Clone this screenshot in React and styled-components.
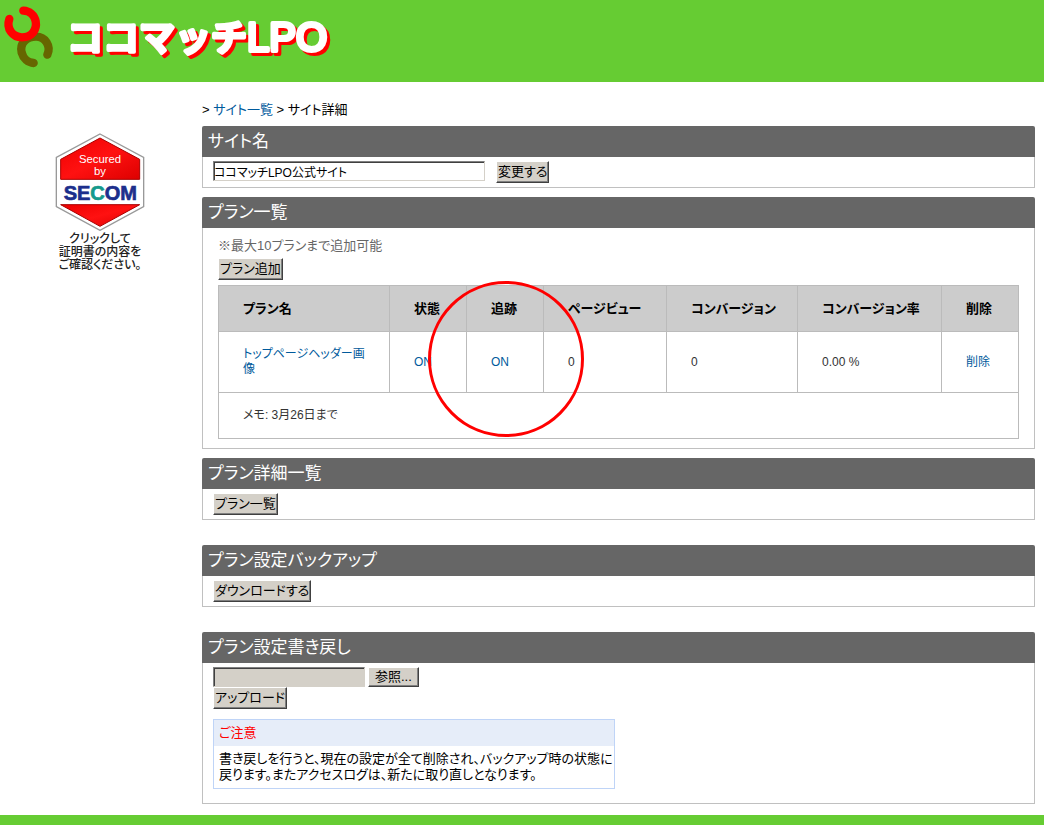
import React, { useRef, useState } from "react";
import styled, { createGlobalStyle } from "styled-components";

const GlobalStyle = createGlobalStyle`
  * {
    box-sizing: border-box;
  }
  body {
    margin: 0;
    background: #fff;
    color: #000;
    font-family: "Liberation Sans", "Noto Sans CJK JP", sans-serif;
    font-size: 13px;
    line-height: 16px;
    font-feature-settings: "palt";
  }
  button, input {
    font: inherit;
    font-feature-settings: inherit;
    color: inherit;
  }
`;

const Header = styled.header`
  display: flex;
  align-items: flex-start;
  gap: 8px;
  height: 82px;
  padding: 4px 0 0 2px;
  background: #66cc33;
`;

const Brand = styled.h1`
  display: flex;
  margin: 0;
`;

const BrandArt = styled.svg`
  fill: #fff;
  stroke: #fff;
  stroke-width: 4px;
  stroke-linejoin: round;
  filter: drop-shadow(3px 3px 0 #f00);
  font-family: "Noto Sans CJK JP", sans-serif;
  font-size: 36px;
  font-weight: 500;
  font-feature-settings: normal;

  tspan {
    font-family: "Liberation Sans", sans-serif;
    font-size: 40px;
    font-weight: 400;
  }
`;

const Layout = styled.div`
  display: grid;
  grid-template-columns: 202px minmax(0, 1fr);
  padding: 20px 9px 11px 0;
`;

const Side = styled.aside`
  display: flex;
  flex-direction: column;
  align-items: center;
  padding: 31px 2px 0 0;
`;

const SealLink = styled.a`
  display: flex;
  flex-direction: column;
  align-items: center;
  gap: 2px;
  color: #222;
  font-size: 12px;
  font-weight: 500;
  line-height: 13px;
  text-align: center;
  text-decoration: none;
`;

const Breadcrumb = styled.nav`
  margin-bottom: 8px;
`;

const Link = styled.a`
  color: #005a9c;
  text-decoration: none;
`;

const Panel = styled.section`
  margin-bottom: ${(p) => p.$gap || 0}px;
`;

const PanelTitle = styled.h2`
  margin: 0;
  padding: 0 6px;
  border-radius: 2px 2px 0 0;
  background: #666;
  color: #fff;
  font-size: 17px;
  font-weight: 400;
  line-height: 31px;
`;

const PanelBody = styled.div`
  padding: ${(p) => p.$pad || "4px 10px"};
  border: 1px solid #c0c0c0;
  border-top: 0;
`;

const Row = styled.div`
  display: flex;
  align-items: flex-start;
  gap: ${(p) => p.$gap || 0}px;
`;

const Button = styled.button`
  display: block;
  height: ${(p) => (p.$small ? 20 : 22)}px;
  padding: 0 ${(p) => (p.$small ? 6 : 1)}px;
  border: 1px solid;
  border-color: #fff #404040 #404040 #fff;
  box-shadow: inset -1px -1px 0 #808080;
  background: #d4d0c8;
  line-height: 18px;
  white-space: nowrap;
`;

const TextBox = styled.input`
  width: ${(p) => p.$width}px;
  height: 20px;
  padding: 0;
  border: 1px solid;
  border-color: #808080 #d4d0c8 #d4d0c8 #808080;
  box-shadow: inset 1px 1px 0 #404040;
  background: ${(p) => (p.readOnly ? "#d4d0c8" : "#fff")};
  font-size: 12px;
`;

const Hint = styled.p`
  margin: 0 0 4px;
  color: #666;
`;

const PlanTable = styled.table`
  width: 100%;
  margin-top: 5px;
  border-collapse: collapse;
  table-layout: fixed;
  color: #333;
  text-align: left;

  th, td {
    padding: 0 24px;
    border: 1px solid #bbb;
  }
  th {
    position: relative;
    height: 46px;
    padding-right: 0;
    background: #ccc;
    color: #000;
    white-space: nowrap;
  }
  td {
    height: 61px;
    font-size: 12px;
    line-height: 15px;
  }
  tr:last-child td {
    height: 46px;
  }
`;

const Marker = styled.span`
  position: absolute;
  z-index: 1;
  top: -5px;
  left: 50%;
  width: 156px;
  height: 156px;
  margin-left: -77px;
  border: 3px solid #f00;
  border-radius: 50%;
  pointer-events: none;
`;

const Notice = styled.div`
  max-width: 402px;
  margin-top: 10px;
  border: 1px solid #bfd4f7;
`;

const NoticeTitle = styled.h3`
  margin: 0;
  padding: 0 5px;
  background: #e6edf9;
  color: #f00;
  font-size: 13px;
  font-weight: 400;
  line-height: 26px;
`;

const NoticeText = styled.p`
  margin: 0;
  padding: 5px 0 5px 5px;
`;

const Footer = styled.footer`
  height: 10px;
  background: #66cc33;
`;

const columns = [
  { name: "プラン名", width: 171 },
  { name: "状態", width: 77 },
  { name: "追跡", width: 77, marked: true },
  { name: "ページビュー", width: 123 },
  { name: "コンバージョン", width: 131 },
  { name: "コンバージョン率", width: 144 },
  { name: "削除", width: 77 },
];

const LogoMark = () => (
  <svg width="55" height="70" viewBox="6 12 165 210" fill="none" strokeWidth="25" strokeLinecap="round" aria-hidden="true">
    <path stroke="#666600" d="M142 164C154 138 136 110 108 110C80 110 58 130 65 158C70 176 84 188 101 189" />
    <path stroke="#f00" d="M28 57C18 86 38 112 66 112C94 112 112 90 107 64C103 44 88 33 70 32" />
  </svg>
);

const LogoText = () => (
  <BrandArt width="280" height="66">
    <text x="2" y="47">
      ココマッチ<tspan>LPO</tspan>
    </text>
  </BrandArt>
);

const Seal = () => (
  <svg width="90" height="98" viewBox="45 26 270 294" role="img" aria-label="Secured by SECOM">
    <defs>
      <linearGradient id="sealRed" x1="0" y1="0" x2="1" y2="1">
        <stop offset="0" stopColor="#e00" />
        <stop offset="0.5" stopColor="#f11" />
        <stop offset="1" stopColor="#d00" />
      </linearGradient>
    </defs>
    <path d="M180 29L311 99V247L180 318L49 247V99Z" fill="#fff" stroke="#999" strokeWidth="4" />
    <path d="M180 41L299 105V165H62V105Z" fill="url(#sealRed)" stroke="#a00" strokeWidth="3" />
    <path d="M62 241H299L180 306Z" fill="url(#sealRed)" stroke="#a00" strokeWidth="3" />
    <text fill="#fff" fontFamily="Liberation Sans, sans-serif" fontSize="34" textAnchor="middle">
      <tspan x="180" y="115">Secured</tspan>
      <tspan x="180" y="151">by</tspan>
    </text>
    <text
      x="181"
      y="227"
      fill="#1c2f8c"
      stroke="#1c2f8c"
      strokeWidth="2"
      fontFamily="Liberation Sans, sans-serif"
      fontSize="60"
      fontWeight="700"
      textAnchor="middle"
    >
      SE
      <tspan fill="#159a8c" stroke="#159a8c">
        C
      </tspan>
      OM
    </text>
  </svg>
);

const App = () => {
  const [siteName, setSiteName] = useState("ココマッチLPO公式サイト");
  const [fileName, setFileName] = useState("");
  const fileRef = useRef(null);

  return (
    <>
      <GlobalStyle />
      <Header>
        <LogoMark />
        <Brand>
          <LogoText />
        </Brand>
      </Header>
      <Layout>
        <Side>
          <SealLink href="#secom">
            <Seal />
            <span>
              クリックして
              <br />
              証明書の内容を
              <br />
              ご確認ください。
            </span>
          </SealLink>
        </Side>
        <main>
          <Breadcrumb>
            &gt; <Link href="#sites">サイト一覧</Link> &gt; サイト詳細
          </Breadcrumb>

          <Panel $gap={9}>
            <PanelTitle>サイト名</PanelTitle>
            <PanelBody>
              <Row $gap={11}>
                <TextBox
                  type="text"
                  aria-label="サイト名"
                  $width={272}
                  value={siteName}
                  onChange={(e) => setSiteName(e.target.value)}
                />
                <Button type="button">変更する</Button>
              </Row>
            </PanelBody>
          </Panel>

          <Panel $gap={9}>
            <PanelTitle>プラン一覧</PanelTitle>
            <PanelBody $pad="10px 15px 9px">
              <Hint>※最大10プランまで追加可能</Hint>
              <Button type="button">プラン追加</Button>
              <PlanTable>
                <colgroup>
                  {columns.map((c) => (
                    <col key={c.name} style={{ width: `${(c.width / 800) * 100}%` }} />
                  ))}
                </colgroup>
                <thead>
                  <tr>
                    {columns.map((c) => (
                      <th key={c.name} scope="col">
                        {c.name}
                        {c.marked && <Marker />}
                      </th>
                    ))}
                  </tr>
                </thead>
                <tbody>
                  <tr>
                    <td>
                      <Link href="#plan">トップページヘッダー画像</Link>
                    </td>
                    <td>
                      <Link href="#status">ON</Link>
                    </td>
                    <td>
                      <Link href="#tracking">ON</Link>
                    </td>
                    <td>0</td>
                    <td>0</td>
                    <td>0.00 %</td>
                    <td>
                      <Link href="#delete">削除</Link>
                    </td>
                  </tr>
                  <tr>
                    <td colSpan={7}>メモ: 3月26日まで</td>
                  </tr>
                </tbody>
              </PlanTable>
            </PanelBody>
          </Panel>

          <Panel $gap={25}>
            <PanelTitle>プラン詳細一覧</PanelTitle>
            <PanelBody>
              <Button type="button">プラン一覧</Button>
            </PanelBody>
          </Panel>

          <Panel $gap={25}>
            <PanelTitle>プラン設定バックアップ</PanelTitle>
            <PanelBody>
              <Button type="button">ダウンロードする</Button>
            </PanelBody>
          </Panel>

          <Panel>
            <PanelTitle>プラン設定書き戻し</PanelTitle>
            <PanelBody $pad="4px 10px 14px">
              <Row $gap={3}>
                <TextBox type="text" aria-label="ファイル" $width={152} value={fileName} readOnly />
                <Button type="button" $small onClick={() => fileRef.current.click()}>
                  参照...
                </Button>
                <input
                  ref={fileRef}
                  type="file"
                  aria-label="参照"
                  hidden
                  onChange={(e) => setFileName(e.target.files[0]?.name || "")}
                />
              </Row>
              <Button type="button">アップロード</Button>
              <Notice>
                <NoticeTitle>ご注意</NoticeTitle>
                <NoticeText>
                  書き戻しを行うと、現在の設定が全て削除され、バックアップ時の状態に戻ります。またアクセスログは、新たに取り直しとなります。
                </NoticeText>
              </Notice>
            </PanelBody>
          </Panel>
        </main>
      </Layout>
      <Footer />
    </>
  );
};

export default App;
